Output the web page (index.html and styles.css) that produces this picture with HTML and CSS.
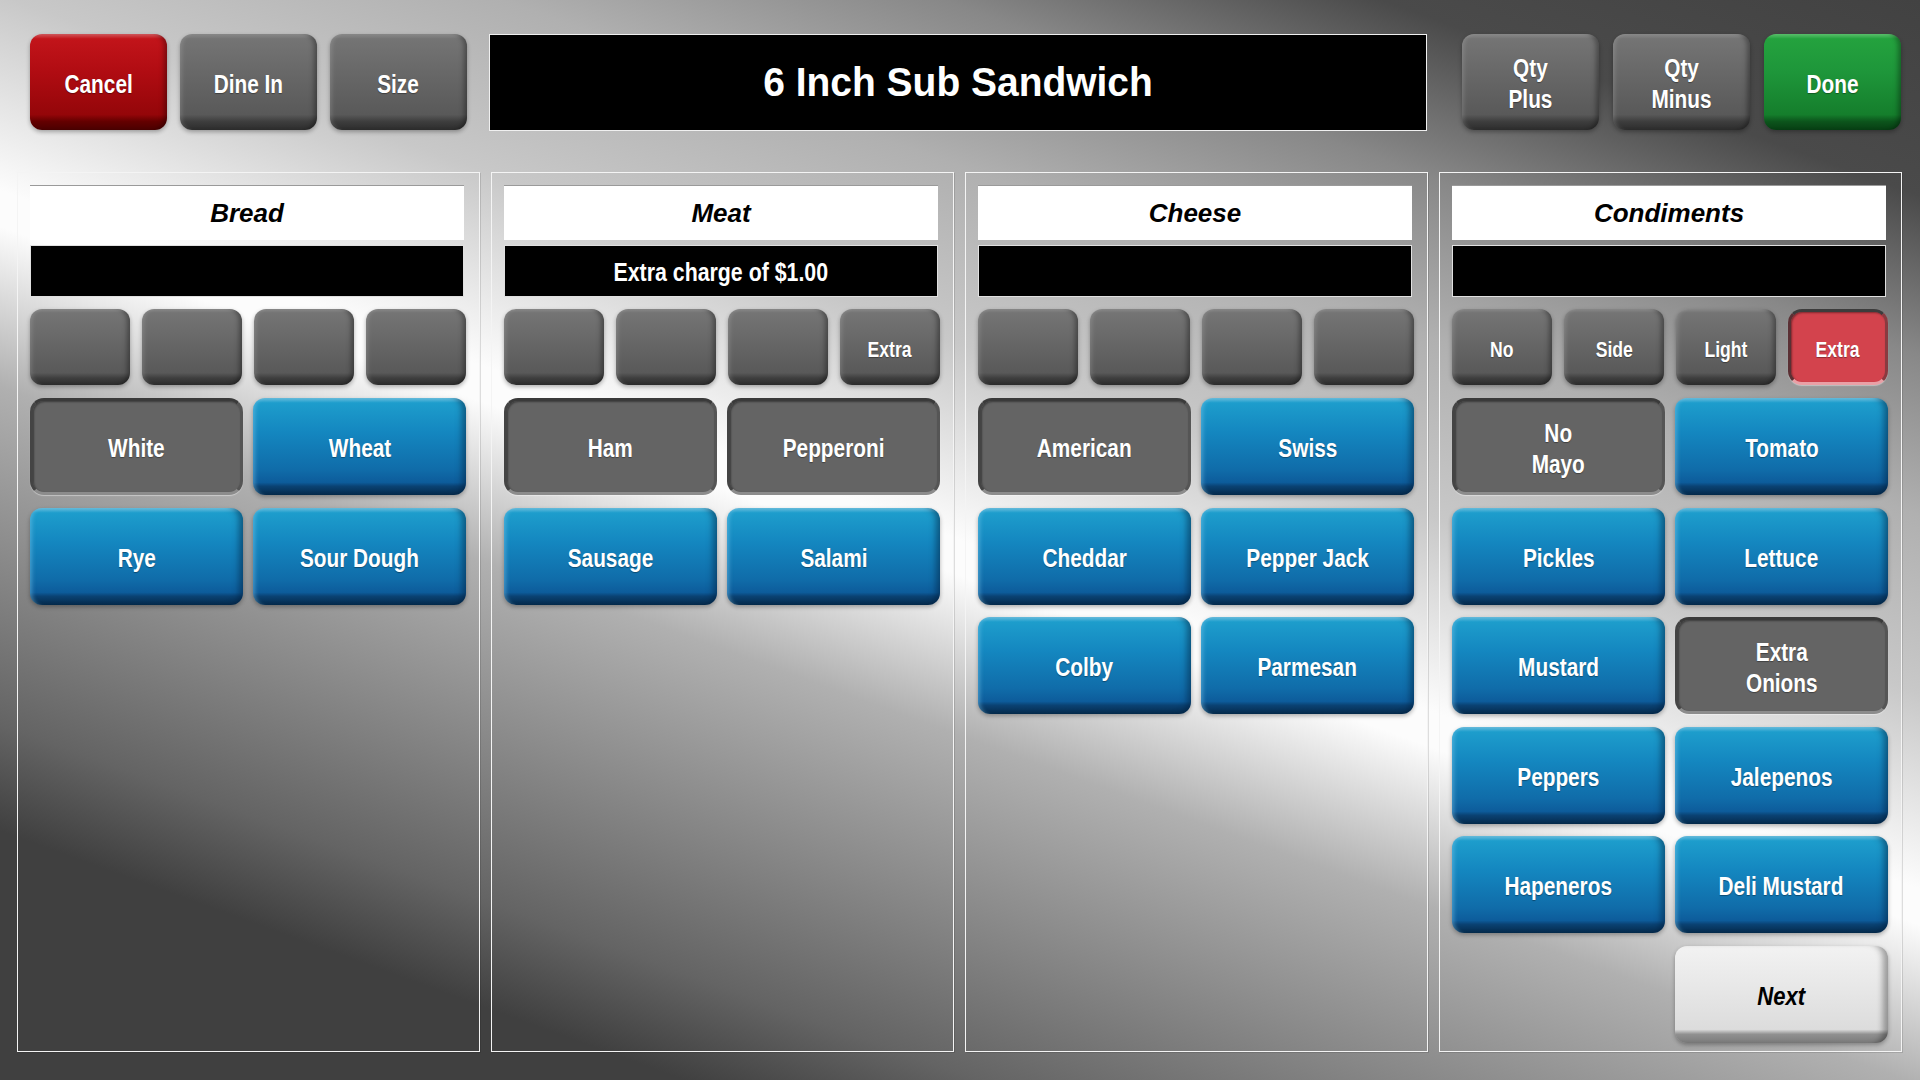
FILE: index.html
```html
<!DOCTYPE html>
<html lang="en">
<head>
    <meta charset="UTF-8">
    <title>6 Inch Sub Sandwich - Modifiers</title>
    <link rel="stylesheet" href="styles.css">
</head>
<body>
    <div class="screen">
        <div class="topbar">
            <div class="btn-group left">
                <div class="btn btn-red top-btn"><span>Cancel</span></div>
                <div class="btn btn-gray top-btn"><span>Dine In</span></div>
                <div class="btn btn-gray top-btn"><span>Size</span></div>
            </div>
            <div class="title"><span>6 Inch Sub Sandwich</span></div>
            <div class="btn-group right">
                <div class="btn btn-gray top-btn"><span>Qty<br>Plus</span></div>
                <div class="btn btn-gray top-btn"><span>Qty<br>Minus</span></div>
                <div class="btn btn-green top-btn"><span>Done</span></div>
            </div>
        </div>

        <div class="panels">
            <section class="panel">
                <div class="panel-head">Bread</div>
                <div class="panel-note"></div>
                <div class="mods">
                    <div class="btn btn-gray mod"></div>
                    <div class="btn btn-gray mod"></div>
                    <div class="btn btn-gray mod"></div>
                    <div class="btn btn-gray mod"></div>
                </div>
                <div class="items">
                    <div class="btn btn-on"><span>White</span></div>
                    <div class="btn btn-blue"><span>Wheat</span></div>
                    <div class="btn btn-blue"><span>Rye</span></div>
                    <div class="btn btn-blue"><span>Sour Dough</span></div>
                </div>
            </section>

            <section class="panel">
                <div class="panel-head">Meat</div>
                <div class="panel-note"><span>Extra charge of $1.00</span></div>
                <div class="mods">
                    <div class="btn btn-gray mod"></div>
                    <div class="btn btn-gray mod"></div>
                    <div class="btn btn-gray mod"></div>
                    <div class="btn btn-gray mod"><span>Extra</span></div>
                </div>
                <div class="items">
                    <div class="btn btn-on"><span>Ham</span></div>
                    <div class="btn btn-on"><span>Pepperoni</span></div>
                    <div class="btn btn-blue"><span>Sausage</span></div>
                    <div class="btn btn-blue"><span>Salami</span></div>
                </div>
            </section>

            <section class="panel">
                <div class="panel-head">Cheese</div>
                <div class="panel-note"></div>
                <div class="mods">
                    <div class="btn btn-gray mod"></div>
                    <div class="btn btn-gray mod"></div>
                    <div class="btn btn-gray mod"></div>
                    <div class="btn btn-gray mod"></div>
                </div>
                <div class="items">
                    <div class="btn btn-on"><span>American</span></div>
                    <div class="btn btn-blue"><span>Swiss</span></div>
                    <div class="btn btn-blue"><span>Cheddar</span></div>
                    <div class="btn btn-blue"><span>Pepper Jack</span></div>
                    <div class="btn btn-blue"><span>Colby</span></div>
                    <div class="btn btn-blue"><span>Parmesan</span></div>
                </div>
            </section>

            <section class="panel">
                <div class="panel-head">Condiments</div>
                <div class="panel-note"></div>
                <div class="mods">
                    <div class="btn btn-gray mod"><span>No</span></div>
                    <div class="btn btn-gray mod"><span>Side</span></div>
                    <div class="btn btn-gray mod"><span>Light</span></div>
                    <div class="btn btn-on btn-on-red mod"><span>Extra</span></div>
                </div>
                <div class="items">
                    <div class="btn btn-on"><span>No<br>Mayo</span></div>
                    <div class="btn btn-blue"><span>Tomato</span></div>
                    <div class="btn btn-blue"><span>Pickles</span></div>
                    <div class="btn btn-blue"><span>Lettuce</span></div>
                    <div class="btn btn-blue"><span>Mustard</span></div>
                    <div class="btn btn-on"><span>Extra<br>Onions</span></div>
                    <div class="btn btn-blue"><span>Peppers</span></div>
                    <div class="btn btn-blue"><span>Jalepenos</span></div>
                    <div class="btn btn-blue"><span>Hapeneros</span></div>
                    <div class="btn btn-blue"><span>Deli Mustard</span></div>
                    <div class="btn btn-light next"><span>Next</span></div>
                </div>
            </section>
        </div>
    </div>
</body>
</html>
```

FILE: styles.css
```css
body { margin: 0; background: #404040; }

.screen {
    width: 1920px;
    height: 1080px;
    overflow: hidden;
    font-family: "Liberation Sans", Arial, sans-serif;
    background: linear-gradient(200deg, #424242 0%, #4a4a4a 11%, #888 20%, #b0b0b0 29%, #c8c8c8 39%, #fcfcfc 50%, #fcfcfc 52%, #b0b0b0 61%, #646464 80%, #404040 86%, #404040 100%);
}

/* top bar */
.topbar { display: flex; padding: 34px 0 0 30px; height: 97px; }
.btn-group { display: flex; gap: 13px; }
.btn-group.right { margin-left: 35px; gap: 14px; }
.top-btn { width: 137px; height: 96px; }
.title {
    width: 936px; height: 95px; margin-left: 22px;
    background: #000; border: 1px solid #f0f0f0;
    color: #fff; font-weight: bold; font-size: 41px;
    display: flex; align-items: center; justify-content: center;
}
.title span { display: inline-block; transform: scaleX(.95); }

/* buttons: labels use a narrow bold face, squeezed from Liberation Sans */
.btn {
    box-sizing: border-box;
    display: flex; align-items: center; justify-content: center; text-align: center;
    padding-top: 4px;
    color: #fff;
    font-weight: bold; font-size: 26px; line-height: 31px;
    text-shadow: 0 1px 1px rgba(0,0,0,.35);
    border-radius: 12px;
}
.btn span { display: inline-block; transform: scaleX(.8); white-space: nowrap; }
.btn-gray {
    background: linear-gradient(#8c8c8c 0, #747474 5%, #686868 40%, #595959 84%, #3e3e3e 91%, #2c2c2c 100%);
    box-shadow: inset -6px 0 5px -3px rgba(0,0,0,.35), inset 5px 0 4px -3px rgba(255,255,255,.15), 0 2px 4px rgba(0,0,0,.3);
}
.btn-blue {
    background: linear-gradient(#6cc2e2 0, #1d9dcc 5%, #1487c0 35%, #106ca9 74%, #0d5c9b 87%, #0a4273 91%, #052a4b 100%);
    box-shadow: inset -8px 0 6px -4px rgba(0,30,60,.5), inset 6px 0 4px -4px rgba(130,205,240,.45), 0 2px 4px rgba(0,0,0,.3);
}
.btn-red {
    background: linear-gradient(#d45a5e 0, #c2141a 5%, #b00c12 40%, #940609 84%, #640000 91%, #4a0000 100%);
    box-shadow: inset -6px 0 5px -3px rgba(0,0,0,.35), 0 2px 4px rgba(0,0,0,.3);
}
.btn-green {
    background: linear-gradient(#5cc46e 0, #24a23e 5%, #1e963a 40%, #157e2c 84%, #0c551c 91%, #073e13 100%);
    box-shadow: inset -6px 0 5px -3px rgba(0,0,0,.35), 0 2px 4px rgba(0,0,0,.3);
}
.btn-on {
    background: #646464;
    border: 3px solid;
    border-color: #3a3a3a #555 #8c8c8c #444;
    border-radius: 14px;
    box-shadow: inset 1px 1px 2px rgba(0,0,0,.4), 0 1px 1px rgba(255,255,255,.4);
}
.btn-on-red {
    background: #d3434d;
    border-color: #3c3c3c #8a3a40 #e9a0a6 #5a3034;
}
.btn-light {
    color: #000; font-style: italic; text-shadow: none;
    background: linear-gradient(#f2f2f2 0, #e8e8e8 40%, #dcdcdc 86%, #909090 91%, #7a7a7a 100%);
    box-shadow: inset -9px 0 6px -4px rgba(0,0,0,.35), 0 2px 4px rgba(0,0,0,.3);
}
.btn-light span { transform: scaleX(.85); }

/* panels */
.panels { display: flex; gap: 11px; padding: 41px 0 0 17px; }
.panel {
    box-sizing: border-box;
    width: 463px; height: 880px;
    border: 1px solid #f4f4f4;
    box-shadow: 1px 1px 0 rgba(0,0,0,.12);
    padding: 12px 13px 0 12px;
}
.panel-head {
    height: 54px; margin-right: 2px;
    background: #fff; border-top: 1px solid #9a9a9a;
    color: #000; font-weight: bold; font-style: italic; font-size: 26px;
    line-height: 54px; text-align: center;
}
.panel-note {
    box-sizing: border-box;
    height: 52px; margin: 5px 2px 0 0; padding-top: 2px;
    background: #000; border: 1px solid #e0e0e0;
    color: #fff; font-weight: bold; font-size: 26px;
    display: flex; align-items: center; justify-content: center;
}
.panel-note span { display: inline-block; transform: scaleX(.82); white-space: nowrap; }
.mods { display: grid; grid-template-columns: repeat(4, 1fr); gap: 12px; margin-top: 12px; }
.mod { height: 76px; font-size: 22px; }
.items { display: grid; grid-template-columns: 1fr 1fr; column-gap: 10px; row-gap: 12.5px; margin-top: 13px; grid-auto-rows: 97px; }
.next { grid-column: 2; }
```
